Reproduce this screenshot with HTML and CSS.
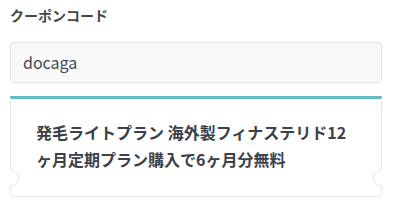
FILE: index.html
```html
<!DOCTYPE html>
<html lang="ja">
<head>
<meta charset="utf-8">
<link rel="stylesheet" href="styles.css">
</head>
<body>
<div class="page">
  <div class="label">クーポンコード</div>
  <div class="input">docaga</div>
  <div class="coupon">
    <p class="coupon-title">発毛ライトプラン 海外製フィナステリド12ヶ月定期プラン購入で6ヶ月分無料</p>
    <span class="notch notch-left"></span>
    <span class="notch notch-right"></span>
  </div>
</div>
</body>
</html>
```
FILE: styles.css
```css
* { box-sizing: border-box; }
html, body { margin: 0; padding: 0; background: #fff; }
body {
  font-family: "Noto Sans CJK JP", "Noto Sans", sans-serif;
  color: #3b4049;
}
.page {
  width: 394px;
  padding: 5px 12px 0 10px;
}
.label {
  font-size: 14px;
  font-weight: 700;
  line-height: 20px;
  color: #454545;
}
.input {
  margin-top: 17px;
  height: 41px;
  border: 1px solid #e3e3e7;
  border-radius: 4px;
  background: #f9f9f9;
  padding: 0 12px;
  font-size: 16px;
  line-height: 39px;
  color: #454a52;
}
.coupon {
  position: relative;
  margin-top: 13px;
  border: 1px solid #e6e6e9;
  border-top: 3px solid #62bcc4;
  border-radius: 0 0 4px 4px;
  padding: 20px 25px 23px;
  height: 101px;
}
.coupon-title {
  margin: 0;
  font-size: 16px;
  font-weight: 700;
  line-height: 27px;
  color: #3b4049;
}
.notch {
  position: absolute;
  top: 70px;
  width: 9px;
  height: 18px;
  background: #fff;
  border: 1px solid #e6e6e9;
}
.notch-left {
  left: -1px;
  border-left: none;
  border-radius: 0 9px 9px 0;
}
.notch-right {
  right: -1px;
  border-right: none;
  border-radius: 9px 0 0 9px;
}
```
